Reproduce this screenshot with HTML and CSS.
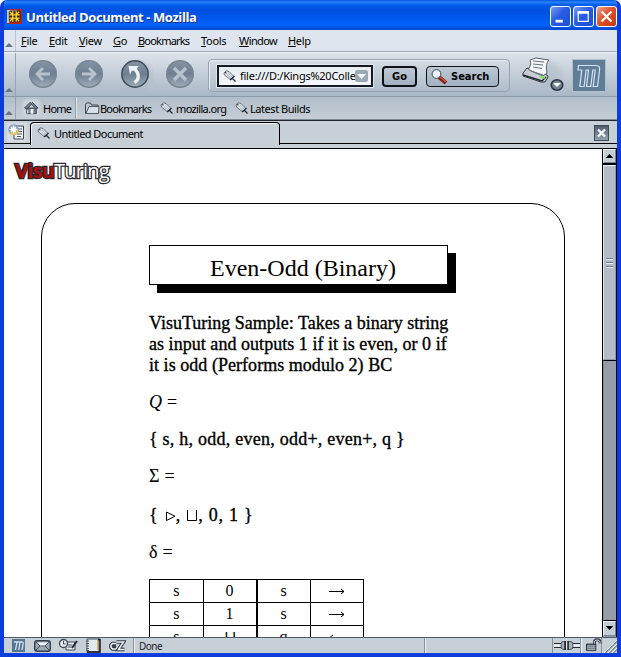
FILE: index.html
```html
<!DOCTYPE html>
<html lang="en">
<head>
<meta charset="utf-8">
<title>Untitled Document</title>
<link rel="stylesheet" href="styles.css">
</head>
<body>
<svg class="defs" width="0" height="0">
  <defs>
    <linearGradient id="orb" x1="0" y1="0" x2="0" y2="1"><stop offset="0" stop-color="#8595a6"/><stop offset=".5" stop-color="#6f7f91"/><stop offset="1" stop-color="#a0adba"/></linearGradient>
    <radialGradient id="glow"><stop offset=".5" stop-color="#a9b5c2"/><stop offset="1" stop-color="#a9b5c2" stop-opacity="0"/></radialGradient>
    <symbol id="tag" viewBox="0 0 13 13"><path d="M1 3 3 .8l3 .7 5 5L8.500 9.500 6.500 9 1.500 5z" fill="#dce2e8" stroke="#5b6673" stroke-width=".9"/><path d="M3.500 4 8 8M5 3l4 4" stroke="#a4afbb" stroke-width=".7"/><path d="m7 10 4.500-4M9.500 8.500l3 3" stroke="#222b38" stroke-width="1.200"/><circle cx="2.800" cy="2.700" r=".8" fill="#334"/></symbol>
    <symbol id="moz" viewBox="0 0 24 24"><path d="M1.500 1.500H18c4 0 5 1 4.500 5L20.500 22.500h-4.300l2-16.500h-2.400l-2 16.500H9.500l2-16.500H9.100l-2 16.500H2.800L4.800 6H1z" fill="#5f7d97" stroke="#d3e2f1" stroke-width="1.200"/></symbol>
  </defs>
</svg>
<div class="window">
  <header class="titlebar">
    <svg class="appicon" viewBox="0 0 16 16"><rect width="16" height="16" rx="1" fill="#bc2417"/><path d="M0 1h11L2 15H0z" fill="#c5c9d6"/><rect x="2" y="1.500" width="12.500" height="12.500" rx="2" fill="#3a290c"/><path d="M6.200 2.500v11M9.800 2.500v11M2.500 6.200h11M2.500 9.800h11M3 3l3 3M13 3l-3 3M3 13l3-3M13 13l-3-3" stroke="#ffd52e" stroke-width="1.400"/></svg>
    <h1 class="title">Untitled Document - Mozilla</h1>
    <div class="winbtns">
      <span class="wb"><svg viewBox="0 0 21 21"><path d="M5 15.500h8" stroke="#fff" stroke-width="3"/></svg></span>
      <span class="wb"><svg viewBox="0 0 21 21"><path d="M4 6h12.500" stroke="#fff" stroke-width="3"/><path d="M4.700 6v9.800h11V6" fill="none" stroke="#fff" stroke-width="1.300"/></svg></span>
      <span class="wb close"><svg viewBox="0 0 21 21"><path d="m5 5 11 11m0-11-11 11" stroke="#fff" stroke-width="2.400"/></svg></span>
    </div>
  </header>
  <nav class="menubar">
    <i class="grippy"></i>
    <span class="m file"><u>F</u>ile</span><span class="m edit"><u>E</u>dit</span><span class="m view"><u>V</u>iew</span><span class="m go"><u>G</u>o</span><span class="m book"><u>B</u>ookmarks</span><span class="m tools"><u>T</u>ools</span><span class="m win"><u>W</u>indow</span><span class="m help"><u>H</u>elp</span>
  </nav>
  <div class="navbar">
    <i class="grippy"></i>
    <div class="orbs">
      <svg viewBox="0 0 30 30"><circle cx="15" cy="15" r="13.300" fill="url(#orb)" stroke="#788592" stroke-width="1.500"/><path d="M22 15H10m5-6-6 6 6 6" fill="none" stroke="#b7c2cd" stroke-width="2.800"/></svg>
      <svg viewBox="0 0 30 30"><circle cx="15" cy="15" r="13.300" fill="url(#orb)" stroke="#788592" stroke-width="1.500"/><path d="M8 15h12m-5-6 6 6-6 6" fill="none" stroke="#b7c2cd" stroke-width="2.800"/></svg>
      <svg viewBox="0 0 30 30"><circle cx="18" cy="17" r="18" fill="url(#glow)" opacity=".6"/><circle cx="15" cy="15" r="13.200" fill="url(#orb)" stroke="#3f4c5b" stroke-width="1.500"/><path d="M14.500 23.500c5-3 5-9 .5-13" fill="none" stroke="#edf2f6" stroke-width="3.200"/><path d="M8.500 7h10l-2.500 4-4.500 1-1.500 4z" fill="#edf2f6"/></svg>
      <svg viewBox="0 0 30 30"><circle cx="15" cy="15" r="13.300" fill="url(#orb)" stroke="#788592" stroke-width="1.500"/><path d="m9 9 12 12m0-12L9 21" stroke="#b7c2cd" stroke-width="3.400"/></svg>
    </div>
    <div class="urlgroup">
      <div class="url"><svg class="tag"><use href="#tag"/></svg><span class="t-url">file:///D:/Kings%20Colle</span><span class="drop"><svg viewBox="0 0 13 12"><path d="M2 4h9L6.500 9z" fill="#fff"/></svg></span></div>
      <div class="btn gobtn"><span>Go</span></div>
      <div class="btn search"><svg viewBox="0 0 17 16"><path d="m8 8 7 6" stroke="#782115" stroke-width="4"/><path d="m9 8 6 5" stroke="#d85638" stroke-width="1.500"/><circle cx="5.500" cy="5" r="4.400" fill="#edf3f8" stroke="#3f4a57"/></svg><span>Search</span></div>
    </div>
    <svg class="printer" viewBox="0 0 46 36"><ellipse cx="27" cy="17" rx="18" ry="16" fill="url(#glow)" opacity=".4"/><path d="M2 16 6 11l20 7 1 2-3 5H20L2 19z" fill="#c8cdd2" stroke="#343b44"/><path d="M8 11c2-3 2-5 1-8l6-2 13 2c-3 3-3 7-2 13l-4 3-14-6z" fill="#f5f6f7" stroke="#59616b"/><path d="m12 4 11 1M12 7l10 1M12 10l9 1.500M10 14l12 4" stroke="#66717c"/><path d="m2 18 19 6 4-4" fill="none" stroke="#20262d" stroke-width="1.400"/><path d="m20 20 4 1" stroke="#6be735" stroke-width="2"/><ellipse cx="36" cy="28" rx="5.800" ry="5.200" fill="#748391" stroke="#293541" stroke-width="1.600"/><path d="M32 26h8l-4 4z" fill="#fff"/></svg>
    <div class="mozlogo"><svg><use href="#moz"/></svg></div>
  </div>
  <div class="personal">
    <i class="grippy"></i>
    <div class="home"><svg viewBox="0 0 16 14"><path d="M3 7h10v6H3z" fill="#71808e" stroke="#35414e"/><path d="m.5 7 6-6L8 2l1-1 6 6-2 1-5-5-5 5z" fill="#74818e" stroke="#3b4752"/><path d="M7 13V8h3v5z" fill="#eef2f5"/><path d="M4 9v4" stroke="#fff"/></svg><span>Home</span></div>
    <div class="pb folder"><svg viewBox="0 0 15 13"><path d="M.5 11.500v-9l1-1.500h4l1 2h6.500v8.500z" fill="#bdc8d2" stroke="#38434e"/><path d="M1 11.500 4 4.500H14l-.5 7z" fill="#d8e0e8" stroke="#4e5a67"/></svg><span>Bookmarks</span></div>
    <div class="pb mozorg"><svg class="tag"><use href="#tag"/></svg><span>mozilla.org</span></div>
    <div class="pb latest"><svg class="tag"><use href="#tag"/></svg><span>Latest Builds</span></div>
  </div>
  <div class="tabs">
    <div class="newtab"><svg viewBox="0 0 18 17"><path d="M6 2h9.500v13H6z" fill="#f3f5f8" stroke="#3d4650"/><path d="M9 5h5M9 7.500h5M9 10h5M9 12.500h4" stroke="#4a5662"/><circle cx="5.500" cy="5.500" r="5.200" fill="#7f9cc8"/><path d="M1 8c2 1 6 1 9.500-3 .5 4-2 6-5 6S1.500 10 1 8z" fill="#e0bd4c"/><path d="m3 3 5 5m0-5L3 8M5.500 1.500v8M1.500 5.500h8" stroke="#fff" stroke-width="1.500"/></svg></div>
    <div class="tab"><svg class="tag"><use href="#tag"/></svg><span>Untitled Document</span></div>
    <div class="tabfill"><span class="tabclose"><svg viewBox="0 0 13 14"><path d="m3 3.500 7 7m0-7-7 7" stroke="#f3f6f9" stroke-width="2.400"/></svg></span></div>
  </div>
  <div class="content">
    <main class="page">
      <div class="logo"><b>Visu</b><span>Turing</span></div>
      <section class="frame">
        <h2><span>Even-Odd (Binary)</span></h2>
        <p class="desc"><span class="d1">VisuTuring Sample: Takes a binary string</span><br><span class="d2">as input and outputs 1 if it is even, or 0 if</span><br><span class="d3">it is odd (Performs modulo 2) BC</span></p>
        <p class="thin"><em>Q</em> =</p>
        <p class="set"><span>{ s, h, odd, even, odd+, even+, q }</span></p>
        <p class="thin">Σ =</p>
        <p class="set syms"><span>{ <svg class="tri" viewBox="0 0 11 11"><path d="M1.500 1v8.500L10 5.200z" fill="none" stroke="#000"/></svg>, <svg class="cup" viewBox="0 0 12 13"><path d="M1.500 1v10.500h9V1" fill="none" stroke="#000"/></svg>, 0, 1 }</span></p>
        <p class="thin">δ =</p>
        <table>
          <tr><td>s</td><td>0</td><td>s</td><td><svg viewBox="0 0 16 7"><path d="M0 3.500h15M12 1l3 2.500L12 6" fill="none" stroke="#000"/></svg></td></tr>
          <tr><td>s</td><td>1</td><td>s</td><td><svg viewBox="0 0 16 7"><path d="M0 3.500h15M12 1l3 2.500L12 6" fill="none" stroke="#000"/></svg></td></tr>
          <tr><td>s</td><td>⊔</td><td>q</td><td><svg viewBox="0 0 16 7"><path d="M1 3.500h15M4 1 1 3.500 4 6" fill="none" stroke="#000"/></svg></td></tr>
        </table>
      </section>
    </main>
    <div class="scroll">
      <div class="sb up"><svg viewBox="0 0 13 13"><path d="M2 9h9L6.500 4z"/></svg></div>
      <div class="thumb"><i></i><i></i><i></i></div>
      <div class="track"></div>
      <div class="sb down"><svg viewBox="0 0 13 13"><path d="M2 4h9L6.500 9z"/></svg></div>
    </div>
  </div>
  <footer class="status">
    <div class="launch">
      <svg viewBox="0 0 114 16"><path d="M0 1h13v13H0z" fill="#557791"/><path d="M2 4h8c2 0 1 2 0 8M5 4 3.500 12M8 4 6.800 12" fill="none" stroke="#d5e1ed" stroke-width="1.300"/>
      <rect x="22.700" y="2.700" width="15.600" height="10.600" rx="2.500" fill="#9ba8b5" stroke="#343f4c" stroke-width="1.400"/><path d="M25 4.500h11l-3 4h-5z" fill="#f5f7f9"/><path d="m24 12 4-4h5l4 4M24 4l4 4m9-4-4 4" fill="none" stroke="#414b57"/>
      <path d="M54 4h9v8h-9z" fill="#f0f2f5" stroke="#3c4650"/><circle cx="51.500" cy="5.500" r="4" fill="#e8edf2" stroke="#3c4855" stroke-width="1.300"/><path d="M51.500 3v3h2m2 1h5m-5 2h4" fill="none" stroke="#3c4650"/><path d="m60 10 5-7" stroke="#222a34" stroke-width="2"/>
      <path d="M75 1h12v13H75z" fill="#e3e9ee" stroke="#47515d"/><path d="M86 1.500h2V14H75" fill="none" stroke="#16191c" stroke-width="1.500"/><path d="M85.500 2v10" stroke="#d7b45a"/><path d="M74 3h3m-3 2.500h3M74 8h3m-3 2.500h3m-3 2h3" stroke="#555f69"/>
      <path d="M104 5.500h-3.500l-1.500 1.500v2.500l1.500 1.500h3.500M101 8.500h3M104.500 4h7l-5 7.500h6" fill="none" stroke="#313b47" stroke-width="3.600"/><path d="M104 5.500h-3.500l-1.500 1.500v2.500l1.500 1.500h3.500M104.500 4h7l-5 7.500h6" fill="none" stroke="#edf1f5" stroke-width="1.500"/></svg>
    </div>
    <div class="done">Done</div>
    <div class="progress"></div>
    <div class="plug"><svg viewBox="0 0 27 15"><path d="M0 7.500h27" stroke="#151a20" stroke-width="5"/><path d="M0 7.500h27" stroke="#eef1f4" stroke-width="3"/><rect x="7.500" y="3.500" width="12" height="8" rx="2" fill="#a8b3be" stroke="#3f4a56"/><path d="M11.500 3v9m3-9v9" stroke="#111" stroke-width="1.600"/><path d="M13.200 3v9" stroke="#fff"/></svg></div>
    <div class="lock"><svg viewBox="0 0 18 15"><path d="M10 8V4.500c0-3.500 6-3.500 6 0V6" fill="none" stroke="#333d48" stroke-width="3"/><path d="M10 8V4.500c0-3 6-3 6 0V6" fill="none" stroke="#eef2f5" stroke-width="1"/><path d="M1.500 6.500h10v7h-10z" fill="#65737f" stroke="#20272e"/><path d="M2 8.500h9m-9 2h9m-9 2h9" stroke="#aebac4"/></svg></div>
    <svg class="resize" viewBox="0 0 15 15"><path d="M3 15 15 3M7 15l8-8M11 15l4-4" stroke="#778591" stroke-width="1.600"/><path d="M2 15 15 2M6 15l9-9M10 15l5-5" stroke="#fff"/></svg>
  </footer>
</div>
</body>
</html>
```

FILE: styles.css
```css
* { box-sizing: border-box; }
body { margin: 0; width: 621px; height: 657px; overflow: hidden; background: #fff; font: 11px/15px "Noto Sans", sans-serif; color: #000; }
.defs { position: absolute; }
svg { display: block; flex: none; }
.window { width: 621px; height: 657px; display: flex; flex-direction: column; border-radius: 7px 7px 0 0; border: solid #0b3ddd; border-width: 0 4px 4px; overflow: hidden; background: #c7cfd7; }
.window > * { flex: none; }
.titlebar { height: 30px; margin: 0 -4px; padding: 0 4px 0 7px; display: flex; align-items: center; background: linear-gradient(#0051df, #2b83fa 2px, #005cf0 5px, #0150df 10px, #0156eb 17px, #0263ff 25px, #0047ca 30px); }
.appicon { width: 15px; height: 15px; margin-top: 3px; }
.title { margin: 3px 0 0 4px; font: bold 13px/18px "Open Sans", sans-serif; color: #fff; text-shadow: 1px 1px #10307c; white-space: nowrap; letter-spacing: -.42px; }
.winbtns { margin-left: auto; display: flex; gap: 2px; padding-top: 3px; }
.wb { width: 21px; height: 21px; border: 1px solid #fff; border-radius: 3px; background: linear-gradient(135deg, #7c9df4, #285be4 45%, #1b51cf); }
.wb svg { width: 19px; height: 19px; }
.wb.close { background: linear-gradient(135deg, #f2a18a, #e1522d 45%, #c6370e); }
.grippy { width: 12px; align-self: stretch; flex: none; border-right: 1px solid #98a4b0; display: flex; align-items: flex-end; padding: 0 0 4px 1px; }
.grippy::after { content: ""; border: 4.500px solid transparent; border-top: 0; border-bottom: 4px solid #667584; }
.menubar { height: 22px; background: #dee5ee; border-bottom: 1px solid #9aa6b3; display: flex; }
.menubar .grippy { border-color: #bac4ce; }
.m { padding-left: 5px; line-height: 22px; white-space: nowrap; letter-spacing: -.3px; flex: none; }
.m u { text-underline-offset: 1px; }
.file { width: 28px; } .edit { width: 30px; } .view { width: 34px; } .go { width: 25px; } .book { width: 63px; letter-spacing: -.8px; } .tools { width: 38px; } .win { width: 49px; letter-spacing: -.6px; } .help { width: 50px; }
.navbar { height: 45px; background: linear-gradient(#dce2ea, #aab8c5); border-top: 1px solid #eef2f5; border-bottom: 1px solid #8d9aa7; display: flex; align-items: flex-start; }
.orbs { display: flex; padding: 6px 0 0 12px; gap: 16px; width: 192px; }
.orbs svg { width: 30px; height: 30px; overflow: visible; margin-right: -.200px; }
.urlgroup { width: 302px; height: 33px; margin-top: 6px; border: 1px solid #96a3b0; border-radius: 4px; box-shadow: inset 1px 1px #e9eef3; display: flex; padding: 5px 0 0 8px; flex: none; }
.url { width: 156px; height: 22px; border: 2px solid #141b25; outline: 1px solid #e0e6ec; background: linear-gradient(#e6edf2, #f6f8fa); display: flex; align-items: center; padding-left: 4px; line-height: 18px; flex: none; }
.tag { width: 13px; height: 13px; }
.t-url { margin-left: 4px; width: 115px; overflow: hidden; white-space: nowrap; letter-spacing: -.25px; }
.drop { width: 13px; height: 12px; background: #9aaab5; border-radius: 2px; }
.btn { height: 21px; margin-top: 1px; border: 2px solid #0e131a; border-radius: 4px; background: linear-gradient(#bdc8d4, #a2b0c0); font-weight: bold; display: flex; align-items: center; flex: none; font-family: "DejaVu Sans Condensed", "DejaVu Sans", sans-serif; }
.gobtn { width: 35px; margin-left: 9px; justify-content: center; }
.search { width: 73px; margin-left: 9px; padding-left: 4px; border-width: 1px; }
.search svg { width: 17px; height: 16px; margin-right: 3px; }
.printer { width: 46px; height: 36px; margin: 4px 0 0 11px; overflow: visible; }
.mozlogo { width: 34px; height: 33px; margin: 6px 0 0 5px; background: #5f7d97; border: 1px solid #aebfcf; padding: 4px; }
.mozlogo svg { width: 24px; height: 24px; }
.personal { height: 23px; background: linear-gradient(#b1becb, #c6ced6); border-bottom: 1px solid #7b8792; display: flex; line-height: 23px; white-space: nowrap; letter-spacing: -.45px; }
.home { width: 61px; display: flex; align-items: center; padding-left: 8px; border-right: 1px solid #e0e5ea; box-shadow: inset -1px 0 #94a0ac; }
.home svg { width: 15px; height: 14px; background: #cbd4dc; box-shadow: 0 0 3px 2px #cbd4dc; border-radius: 4px; }
.home span { margin-left: 4px; letter-spacing: -.75px; }
.pb { display: flex; align-items: center; flex: none; }
.folder { margin-left: 8px; width: 75px; letter-spacing: -.8px; }
.folder svg { width: 15px; height: 13px; }
.mozorg { width: 75px; letter-spacing: -.65px; }
.mozorg span { margin-left: 3px; } .latest span { margin-left: 2px; }
.tabs { height: 29px; display: flex; border-top: 1px solid #20262c; border-bottom: 1px solid #000; padding-bottom: 4px; background: #c7cfd7; }
.newtab { width: 26px; height: 23px; border-bottom: 1px solid #000; padding: 3px 0 0 4px; }
.newtab svg { width: 18px; height: 17px; background: #d6dde4; box-shadow: 0 0 2px 1px #d6dde4; }
.tab { width: 250px; height: 23px; margin-top: 1px; border: 1px solid #000; border-bottom: 0; border-radius: 4px 4px 0 0; box-shadow: inset 1px 1px #eef2f6; display: flex; align-items: center; padding: 0 0 2px 6px; flex: none; }
.tab span { margin-left: 4px; letter-spacing: -.55px; }
.tabfill { flex: 1; height: 23px; border-bottom: 1px solid #000; padding: 4px 8px 0 0; display: flex; justify-content: flex-end; }
.tabclose { width: 15px; height: 16px; border: 1px solid #3f4c59; background: linear-gradient(#52606e, #92a1af); }
.tabclose svg { width: 13px; height: 14px; }
.content { height: 488px; display: flex; overflow: hidden; background: #fff; }
.page { width: 598px; overflow: hidden; padding: 10px 0 0 37px; font-family: "Liberation Serif", serif; }
.logo { margin-left: -26px; height: 25px; font: 20px/23px "Open Sans", sans-serif; white-space: nowrap; paint-order: stroke fill; -webkit-text-stroke: 2.500px #28282c; letter-spacing: -.8px; }
.logo b { color: #a80f0d; }
.logo span { color: #fff; }
.frame { margin-top: 19px; width: 524px; height: 700px; border: 1px solid #000; border-radius: 34px 34px 0 0; padding: 41px 0 0 107px; }
h2 { margin: 0; width: 299px; height: 40px; border: 1px solid #000; box-shadow: 8px 8px #000; font-size: 24px; font-weight: normal; line-height: 45px; text-align: center; padding-left: 9px; background: #fff; white-space: nowrap; }
.frame p { margin: 0; white-space: nowrap; height: 21px; margin-top: 16px; font-size: 18px; line-height: 21px; }
.frame p.desc { height: 63px; margin-top: 28px; -webkit-text-stroke: .35px #000; }
.d2, .d3 { letter-spacing: .04px; }
.set { -webkit-text-stroke: .35px #000; letter-spacing: .24px; }
.thin { -webkit-text-stroke: .1px #000; letter-spacing: .2px; }
.syms svg { display: inline-block; vertical-align: -1px; }
.frame p.syms { margin-top: 18px; letter-spacing: .75px; }
.tri { width: 11px; height: 11px; margin-left: 1px; } .cup { width: 12px; height: 13px; }
table { border-collapse: collapse; margin-top: 16px; width: 215px; table-layout: fixed; font-size: 16px; line-height: 22px; }
td { border: 1px solid #000; height: 23px; padding: 0; text-align: center; width: 53px; }
td:nth-child(2) { border-right-width: 2px; }
td svg { width: 16px; height: 7px; margin: 0 auto; }
.scroll { width: 15px; border: solid #000; border-width: 0 1px; display: flex; flex-direction: column; background: #969da8; }
.sb { height: 15px; flex: none; background: #c5ced6; border: 1px solid; border-color: #eef2f5 #77838e #77838e #eef2f5; }
.sb svg { width: 11px; height: 12px; }
.up { box-shadow: 0 2px #000; height: 14px; }
.thumb { height: 195px; margin-top: 2px; background: #b4bdc7; border: 1px solid; border-color: #eef2f5 #8d98a3 #8d98a3 #e3e9ee; padding: 92px 2px 0 2px; flex: none; }
.thumb i { display: block; height: 2px; margin-bottom: 2px; border-top: 1px solid #687d94; background: #e7edf3; }
.track { flex: 1; border-top: 1px solid #000; border-bottom: 1px solid #000; border-left: 1px solid #858c96; }
.down { margin-bottom: 1px; }
.status { height: 16px; border-top: 1px solid #4e5b68; display: flex; background: #c7cfd7; }
.status > * { flex: none; }
.launch { width: 130px; height: 15px; padding-left: 8px; border-right: 1px solid #84909c; }
.launch svg { width: 114px; height: 16px; }
.done { width: 291px; padding: 1px 0 0 4px; border-left: 1px solid #eef2f5; border-right: 1px solid #84909c; font-size: 10px; line-height: 15px; color: #1c232a; letter-spacing: -.5px; }
.progress { width: 128px; border-left: 1px solid #eef2f5; border-right: 1px solid #84909c; }
.plug { width: 28px; border-right: 1px solid #84909c; padding-left: 1px; }
.plug svg { width: 26px; height: 15px; }
.lock { width: 21px; padding-left: 3px; border-left: 1px solid #eef2f5; border-right: 1px solid #84909c; }
.lock svg { width: 17px; height: 14px; }
.resize { width: 15px; height: 15px; }
```
